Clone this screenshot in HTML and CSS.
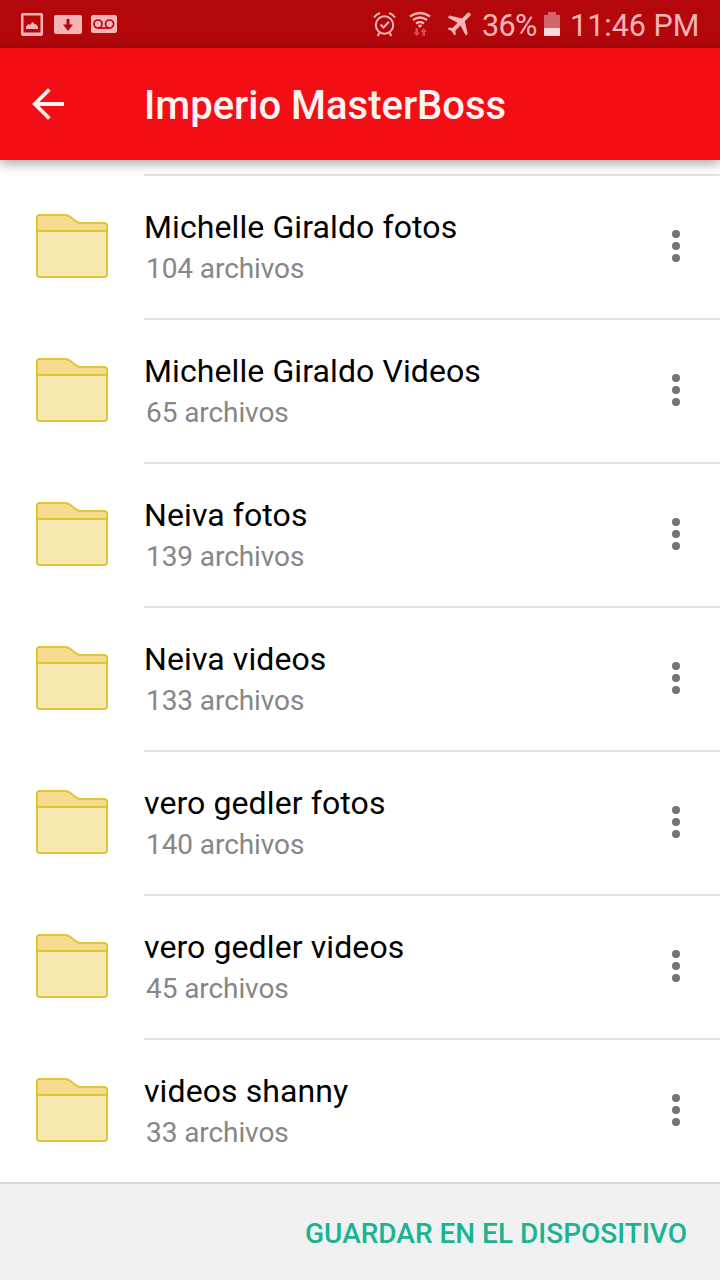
FILE: index.html
```html
<!DOCTYPE html>
<html lang="es">
<head>
<meta charset="utf-8">
<title>Imperio MasterBoss</title>
<link rel="stylesheet" href="styles.css">
</head>
<body>
<svg class="defs" width="0" height="0">
  <symbol id="folder" viewBox="0 0 76 68">
    <path d="M3 18V5.500Q3 3 5.500 3H31Q34 3 36.500 5L41.500 9Q44 11 47 11H70Q73 11 73 14V18Z" fill="#f5dd8d"/>
    <path d="M3 19H73V62Q73 65 70 65H6Q3 65 3 62Z" fill="#f7e8b0"/>
    <path d="M3 19V5.500Q3 3 5.500 3H31Q34 3 36.500 5L41.500 9Q44 11 47 11H70Q73 11 73 14V62Q73 65 70 65H6Q3 65 3 62V19H73" fill="none" stroke="#dfc338" stroke-width="2"/>
  </symbol>
  <symbol id="more" viewBox="0 0 8 32">
    <circle cx="4" cy="4" r="4"/><circle cx="4" cy="16" r="4"/><circle cx="4" cy="28" r="4"/>
  </symbol>
</svg>
<div class="screen">
  <div class="status">
    <svg class="notices" width="120" height="48" viewBox="0 0 120 48" fill="#f5b5b7">
      <path fill-rule="evenodd" d="M23 13H41Q43 13 43 15V34Q43 36 41 36H23Q21 36 21 34V15Q21 13 23 13ZM23.500 15.500V32.500H40.500V15.500Z"/>
      <path d="M26 29V26.500L28.500 24L30 25L32.500 22L35 24.500L36 24L38 27V29Z"/>
      <path fill-rule="evenodd" d="M56 15H80Q82 15 82 17V32Q82 34 80 34H56Q54 34 54 32V17Q54 15 56 15ZM66.500 19V24.500H63L68 31L73 24.500H69.500V19Z"/>
      <rect x="91" y="15" width="26" height="18" rx="2"/>
      <g fill="none" stroke="#b3070c" stroke-width="1.700"><circle cx="98" cy="24" r="4"/><circle cx="109.500" cy="24" r="4"/><path d="M98 28H109.500"/></g>
    </svg>
    <div class="system">
      <svg width="106" height="48" viewBox="370 0 106 48" fill="none" stroke="#f5b5b7">
        <circle cx="384.500" cy="25" r="8.700" stroke-width="2"/>
        <path d="M380.500 24.500L383.500 27.500L389 21.800M379.500 32.500L377.800 36M389.500 32.500L391.200 36" stroke-width="2"/>
        <path d="M374 17.500Q376.500 13.800 380 13M389 13Q392.500 13.800 395 17.500" stroke-width="2"/>
        <path d="M410 16.500Q420 9.500 430 16.500M413 20Q420 15 427 20M416 23.500Q420 20.500 424 23.500" stroke-width="2.300"/>
        <path d="M417.700 25.500Q420 23.700 422.300 25.500L420 28Z" fill="#f5b5b7" stroke="none"/>
        <path d="M415.500 28H418V32.500H420L416.700 36L413.300 32.500H415.500ZM422.500 36H425V32H427L423.700 28L420.500 32H422.500Z" fill="#d84b50" stroke="none"/>
        <path transform="translate(461 23.200) rotate(45) scale(1.350) translate(-12 -12)" d="M21 16v-2l-8-5V3.500c0-.83-.67-1.500-1.500-1.500S10 2.670 10 3.500V9l-8 5v2l8-2.500V19l-2 1.500V22l3.500-1 3.500 1v-1.500L13 19v-5.500l8 2.500z" fill="#f5b5b7" stroke="none"/>
      </svg>
      <span class="percent">36%</span>
      <svg class="battery" width="16" height="48" viewBox="544 0 16 48"><path d="M548 12H556V15H560V28H544V15H548Z" fill="#d4656a"/><path d="M544 28H560V36H544Z" fill="#ffd9db"/></svg>
      <span class="clock">11:46 PM</span>
    </div>
  </div>
  <header class="bar">
    <svg class="back" width="32" height="32" viewBox="0 0 32 32" fill="none" stroke="#fff4ee" stroke-width="3.800"><path d="M32 16H3M17.300 1.500L2.800 16L17.300 30.500"/></svg>
    <h1 class="title">Imperio MasterBoss</h1>
  </header>
  <main class="list">
    <div class="row"><svg class="folder"><use href="#folder"/></svg><div class="info"><div class="text"><div class="name">Michelle Giraldo fotos</div><div class="count">104 archivos</div></div><svg class="more"><use href="#more"/></svg></div></div>
    <div class="row"><svg class="folder"><use href="#folder"/></svg><div class="info"><div class="text"><div class="name">Michelle Giraldo Videos</div><div class="count">65 archivos</div></div><svg class="more"><use href="#more"/></svg></div></div>
    <div class="row"><svg class="folder"><use href="#folder"/></svg><div class="info"><div class="text"><div class="name">Neiva fotos</div><div class="count">139 archivos</div></div><svg class="more"><use href="#more"/></svg></div></div>
    <div class="row"><svg class="folder"><use href="#folder"/></svg><div class="info"><div class="text"><div class="name">Neiva videos</div><div class="count">133 archivos</div></div><svg class="more"><use href="#more"/></svg></div></div>
    <div class="row"><svg class="folder"><use href="#folder"/></svg><div class="info"><div class="text"><div class="name">vero gedler fotos</div><div class="count">140 archivos</div></div><svg class="more"><use href="#more"/></svg></div></div>
    <div class="row"><svg class="folder"><use href="#folder"/></svg><div class="info"><div class="text"><div class="name">vero gedler videos</div><div class="count">45 archivos</div></div><svg class="more"><use href="#more"/></svg></div></div>
    <div class="row"><svg class="folder"><use href="#folder"/></svg><div class="info"><div class="text"><div class="name">videos shanny</div><div class="count">33 archivos</div></div><svg class="more"><use href="#more"/></svg></div></div>
  </main>
  <footer class="footer"><button class="save">GUARDAR EN EL DISPOSITIVO</button></footer>
</div>
</body>
</html>
```
FILE: styles.css
```css
* { box-sizing: border-box; }
body { margin: 0; background: #fff; font-family: Roboto, "Liberation Sans", sans-serif; }
.defs { display: none; }
.screen { width: 720px; height: 1280px; display: flex; flex-direction: column; overflow: hidden; }
.status { flex: none; height: 48px; background: #b3070c; display: flex; justify-content: space-between; color: #f5b5b7; }
.system { display: flex; padding-right: 23px; font-size: 30.5px; line-height: 51px; white-space: nowrap; font-weight: 400; }
.percent { width: 56px; margin-left: 6px; letter-spacing: -.6px; }
.battery { margin-left: 6px; margin-right: 10px; }
.clock { width: 127px; }
.bar { flex: none; height: 112px; background: #f30d14; display: flex; align-items: center; padding-left: 32px; box-shadow: 0 3px 12px rgba(0, 0, 0, .38); z-index: 1; }
.title { margin: 4px 0 0 80px; color: #fff4f2; font-size: 40px; line-height: 48px; font-weight: 500; }
.list { flex: 1; padding-top: 14px; display: flex; flex-direction: column; }
.row { height: 144px; display: flex; padding-left: 34px; }
.folder { width: 76px; height: 68px; margin: 38px 34px 0 0; flex: none; }
.info { flex: 1; display: flex; justify-content: space-between; border-top: 2px solid #e3e3e3; padding: 31px 40px 0 0; }
.name { color: #000; font-size: 32px; line-height: 40px; letter-spacing: .1px; }
.count { color: #868686; font-size: 28px; line-height: 44px; padding-left: 2px; letter-spacing: -.08px; }
.more { width: 8px; height: 32px; margin-top: 23px; fill: #747474; }
.footer { flex: none; height: 98px; background: #f1f1f1; border-top: 2px solid #dadada; display: flex; align-items: center; justify-content: flex-end; padding-right: 33px; }
.save { border: 0; padding: 2px 0 0; background: none; color: #1ab394; font-family: inherit; font-size: 28px; font-weight: 500; }
```
